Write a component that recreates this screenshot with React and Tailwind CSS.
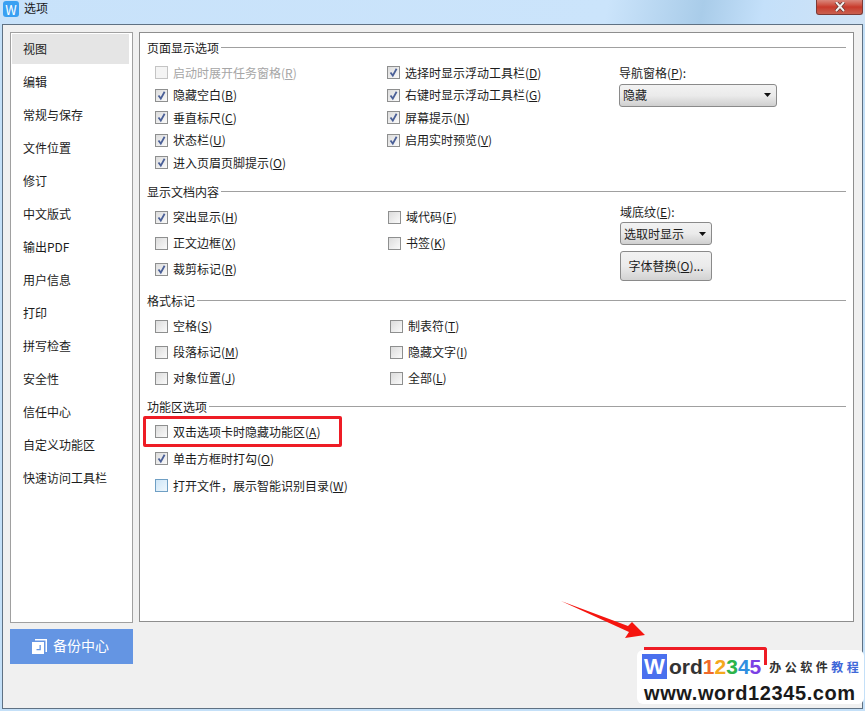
const cjk = { fontFamily: '"Noto Sans CJK SC", "Noto Sans", sans-serif' };

const navItems = ['视图', '编辑', '常规与保存', '文件位置', '修订', '中文版式', '输出PDF', '用户信息', '打印', '拼写检查', '安全性', '信任中心', '自定义功能区', '快速访问工具栏'];

function CheckBox({ checked, disabled, hover }) {
  const box = disabled
    ? 'border-[#c4c4c4] bg-[#f4f4f4]'
    : hover
      ? 'border-[#6f9fc4] bg-gradient-to-br from-[#cfe6f7] to-[#eef7fd]'
      : 'border-[#8e8f8f] bg-gradient-to-br from-[#dcdcdc] to-[#fafafa]';
  return (
    <span className={`flex h-[13px] w-[13px] flex-none items-center justify-center border ${box}`}>
      {checked && (
        <svg width="11" height="11" viewBox="0 0 11 11">
          <path d="M2.5 5.5 L4.8 8.6 L8.6 1.8" fill="none" stroke="#4a5f97" strokeWidth="1.8" />
        </svg>
      )}
    </span>
  );
}

function Option({ label, hotkey, checked, disabled, hover, className = '' }) {
  return (
    <div className={`flex items-center gap-[5px] ${className}`}>
      <CheckBox checked={checked} disabled={disabled} hover={hover} />
      <span className={`whitespace-nowrap ${disabled ? 'text-[#a6a6a6]' : 'text-[#1c1c1c]'}`}>
        {label}(<u>{hotkey}</u>)
      </span>
    </div>
  );
}

function Heading({ children, className = '' }) {
  return (
    <div className={`flex items-center gap-[2px] ${className}`}>
      <span className="text-[#1c1c1c]">{children}</span>
      <div className="h-px flex-1 bg-[#a0a0a0]" />
    </div>
  );
}

function Select({ value, className = '' }) {
  return (
    <div className={`flex items-center justify-between rounded-[3px] border border-[#8a8a8a] bg-gradient-to-b from-[#f2f2f2] via-[#ebebeb] to-[#cfcfcf] pl-[3px] pr-[5px] ${className}`}>
      <span className="text-[#1c1c1c]">{value}</span>
      <svg width="7" height="4" viewBox="0 0 7 4"><path d="M0 0 H7 L3.5 4 Z" fill="#111" /></svg>
    </div>
  );
}

export default function App() {
  return (
    <div style={cjk} className="relative flex h-[711px] w-[865px] flex-col overflow-hidden bg-[#c4e0f8] text-xs">
      {/* title bar */}
      <div className="flex h-[24px] flex-none items-start bg-[linear-gradient(100deg,#c8e2fa_0%,#cbe4fb_70%,#a9cce9_81%,#c4e0fa_88%,#d0e3f5_100%)] pl-[3px]">
        <div className="mt-[1px] flex h-[16px] w-[16px] items-center justify-center rounded-[3px] bg-[#3aa0f2] text-[13px] leading-none text-white">W</div>
        <span className="ml-[5px] text-[#1a1a1a]">选项</span>
        <div className="ml-auto mr-[2px] flex h-[15px] w-[47px] items-center justify-center rounded-b-[3px] border border-t-0 border-[#7d3a35] bg-gradient-to-b from-[#d9877c] via-[#c8392b] to-[#c9604f]">
          <svg width="12" height="10" viewBox="0 0 12 10">
            <path d="M2 0 L10 9 M10 0 L2 9" stroke="#5b3330" strokeWidth="3.4" />
            <path d="M2 0 L10 9 M10 0 L2 9" stroke="#f4f0ee" strokeWidth="2" />
          </svg>
        </div>
      </div>

      {/* dialog body */}
      <div className="mx-[2px] mb-[2px] flex flex-1 gap-[6px] border border-[#5f7183] bg-[#f0f0f0] pl-[7px] pr-[8px] pt-[7px]">
        <div className="flex w-[123px] flex-none flex-col gap-[6px]">
          <div className="flex h-[591px] flex-col border border-[#a0a0a0] bg-white p-[1px]">
            {navItems.map((item, i) => (
              <div key={item} className={`flex flex-none items-center pl-[11px] text-[#1c1c1c] ${i === 0 ? 'mr-[2px] h-[30px] bg-[#e5e5e5]' : 'h-[33px] pb-[1px]'} ${i === 1 ? 'mt-[2px]' : ''}`}>
                {item}
              </div>
            ))}
          </div>
          <div className="flex h-[35px] items-center justify-center gap-[6px] pr-[2px] bg-[#6495e3] text-sm text-white">
            <svg width="15" height="15" viewBox="0 0 15 15">
              <path d="M3 0 H15 V13 H13.5 V1.5 H3 Z" fill="#fff" />
              <path fillRule="evenodd" d="M0 3 H12 V15 H0 Z M7.5 6 V10 H4.5 V11.2 H8.8 V6 Z" fill="#fff" />
            </svg>
            <span className="pb-[3px]">备份中心</span>
          </div>
        </div>

        <div className="h-[590px] flex-1 border border-[#8e8e8e] bg-white px-[7px] pt-[6px]">
          <Heading className="h-[17px]">页面显示选项</Heading>
          <div className="mt-[5.5px] flex">
            <div className="flex w-[232px] flex-none flex-col pl-[8px] [&>*]:h-[22.5px]">
              <Option label="启动时展开任务窗格" hotkey="R" disabled />
              <Option label="隐藏空白" hotkey="B" checked />
              <Option label="垂直标尺" hotkey="C" checked />
              <Option label="状态栏" hotkey="U" checked />
              <Option label="进入页眉页脚提示" hotkey="O" checked />
            </div>
            <div className="flex w-[233px] flex-none flex-col pl-[8px] [&>*]:h-[22.5px]">
              <Option label="选择时显示浮动工具栏" hotkey="D" checked />
              <Option label="右键时显示浮动工具栏" hotkey="G" checked />
              <Option label="屏幕提示" hotkey="N" checked />
              <Option label="启用实时预览" hotkey="V" checked />
            </div>
            <div className="pl-[7px] pt-[3px]">
              <div className="text-[#1c1c1c]">导航窗格(<u>P</u>):</div>
              <Select value="隐藏" className="mt-[3px] h-[23px] w-[158px]" />
            </div>
          </div>

          <Heading className="mt-[9px] h-[17px]">显示文档内容</Heading>
          <div className="mt-[4px] flex">
            <div className="flex w-[233px] flex-none flex-col pl-[8px] [&>*]:h-[26px]">
              <Option label="突出显示" hotkey="H" checked />
              <Option label="正文边框" hotkey="X" />
              <Option label="裁剪标记" hotkey="R" checked />
            </div>
            <div className="flex w-[232px] flex-none flex-col pl-[8px] [&>*]:h-[26px]">
              <Option label="域代码" hotkey="F" />
              <Option label="书签" hotkey="K" />
            </div>
            <div className="pl-[8px]">
              <div className="text-[#1c1c1c]">域底纹(<u>E</u>):</div>
              <Select value="选取时显示" className="mt-[2px] h-[23px] w-[92px]" />
              <div className="mt-[6px] flex h-[30px] w-[92px] items-center justify-center rounded-[3px] border border-[#8a8a8a] bg-gradient-to-b from-[#f2f2f2] via-[#ebebeb] to-[#d2d2d2] text-[#1c1c1c]">
                字体替换(<u>O</u>)...
              </div>
            </div>
          </div>

          <Heading className="mt-[10px] h-[17px]">格式标记</Heading>
          <div className="mt-[4px] flex">
            <div className="flex w-[235px] flex-none flex-col pl-[8px] [&>*]:h-[26px]">
              <Option label="空格" hotkey="S" />
              <Option label="段落标记" hotkey="M" />
              <Option label="对象位置" hotkey="J" />
            </div>
            <div className="flex flex-col pl-[8px] [&>*]:h-[26px]">
              <Option label="制表符" hotkey="T" />
              <Option label="隐藏文字" hotkey="I" />
              <Option label="全部" hotkey="L" />
            </div>
          </div>

          <Heading className="mt-[7px] h-[17px]">功能区选项</Heading>
          <div className="mt-[3px] flex flex-col pl-[8px] [&>*]:h-[27px]">
            <div className="relative flex items-center">
              <Option label="双击选项卡时隐藏功能区" hotkey="A" />
              <div className="absolute left-[-12px] top-[-2px] h-[31px] w-[199px] rounded-[2px] border-[3px] border-[#ee1c25]" />
            </div>
            <Option label="单击方框时打勾" hotkey="O" checked />
            <Option label="打开文件，展示智能识别目录" hotkey="W" hover />
          </div>
        </div>
      </div>

      {/* annotation arrow */}
      <svg className="absolute left-[555px] top-[595px]" width="100" height="50" viewBox="555 595 100 50">
        <polygon points="561,601 628,626 632,622 645,635 625,638 629,632" fill="#f5150f" />
      </svg>

      {/* watermark */}
      <div className="absolute left-[637px] top-[650px] flex h-[54px] w-[227px] flex-col rounded-[6px] bg-white pl-[5px] pt-[2px]" style={{ fontFamily: '"Liberation Sans", sans-serif' }}>
        <div className="flex h-[29px] items-center">
          <span className="flex h-[25px] w-[25px] items-center justify-center bg-[#4a70ee] text-[22px] font-bold leading-none text-white">W</span>
          <span className="ml-[2px] text-[21px] font-bold leading-none text-[#333]">ord</span>
          <span className="text-[21px] font-bold leading-none">
            <span className="text-[#f0692b]">1</span>
            <span className="text-[#f5a81c]">2</span>
            <span className="text-[#2cb34a]">3</span>
            <span className="text-[#2f8fe0]">4</span>
            <span className="text-[#7b3fe4]">5</span>
          </span>
          <span className="ml-[8px] text-[12px] font-bold tracking-[3.5px] text-[#333]" style={{ fontFamily: '"Noto Sans CJK SC", serif' }}>办公软件</span>
          <span className="text-[12px] font-bold tracking-[3.5px] text-[#3f68d8]" style={{ fontFamily: '"Noto Sans CJK SC", serif' }}>教程</span>
        </div>
        <div className="mt-[1px] pl-[2px] text-[20px] font-bold leading-[22px] tracking-[0.6px] text-[#1a1a1a]">www.word12345.com</div>
      </div>

      {/* red box, its corner shows over the watermark */}
      <div className="absolute left-[644px] top-[647px] h-[18px] w-[123px] rounded-tr-[3px] border-r-[3px] border-t-[3px] border-[#ee1c25]" />
    </div>
  );
}
